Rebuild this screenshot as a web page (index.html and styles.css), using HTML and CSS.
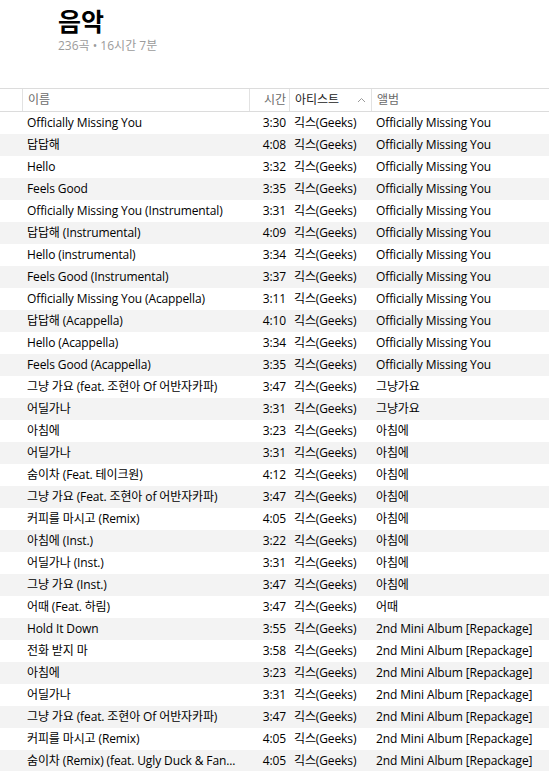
FILE: index.html
```html
<!DOCTYPE html>
<html lang="ko">
<head>
<meta charset="utf-8">
<title>음악</title>
<link rel="stylesheet" href="styles.css">
</head>
<body>
<div class="page">
  <header class="top">
    <h1 class="title">음악</h1>
    <div class="sub">236곡 • 16시간 7분</div>
  </header>
  <div class="list">
    <div class="row head">
      <div class="c lead"></div>
      <div class="c name">이름</div>
      <div class="c time">시간</div>
      <div class="c artist sorted">아티스트<span class="arrow"><svg width="9" height="6" viewBox="0 0 9 6"><path d="M1 5 L4.5 1.5 L8 5" fill="none" stroke="#9a9a9a" stroke-width="1"/></svg></span></div>
      <div class="c album">앨범</div>
    </div>
    <div class="row"><div class="c lead"></div><div class="c name">Officially Missing You</div><div class="c time">3:30</div><div class="c artist">긱스(Geeks)</div><div class="c album">Officially Missing You</div></div>
    <div class="row"><div class="c lead"></div><div class="c name">답답해</div><div class="c time">4:08</div><div class="c artist">긱스(Geeks)</div><div class="c album">Officially Missing You</div></div>
    <div class="row"><div class="c lead"></div><div class="c name">Hello</div><div class="c time">3:32</div><div class="c artist">긱스(Geeks)</div><div class="c album">Officially Missing You</div></div>
    <div class="row"><div class="c lead"></div><div class="c name">Feels Good</div><div class="c time">3:35</div><div class="c artist">긱스(Geeks)</div><div class="c album">Officially Missing You</div></div>
    <div class="row"><div class="c lead"></div><div class="c name">Officially Missing You (Instrumental)</div><div class="c time">3:31</div><div class="c artist">긱스(Geeks)</div><div class="c album">Officially Missing You</div></div>
    <div class="row"><div class="c lead"></div><div class="c name">답답해 (Instrumental)</div><div class="c time">4:09</div><div class="c artist">긱스(Geeks)</div><div class="c album">Officially Missing You</div></div>
    <div class="row"><div class="c lead"></div><div class="c name">Hello (instrumental)</div><div class="c time">3:34</div><div class="c artist">긱스(Geeks)</div><div class="c album">Officially Missing You</div></div>
    <div class="row"><div class="c lead"></div><div class="c name">Feels Good (Instrumental)</div><div class="c time">3:37</div><div class="c artist">긱스(Geeks)</div><div class="c album">Officially Missing You</div></div>
    <div class="row"><div class="c lead"></div><div class="c name">Officially Missing You (Acappella)</div><div class="c time">3:11</div><div class="c artist">긱스(Geeks)</div><div class="c album">Officially Missing You</div></div>
    <div class="row"><div class="c lead"></div><div class="c name">답답해 (Acappella)</div><div class="c time">4:10</div><div class="c artist">긱스(Geeks)</div><div class="c album">Officially Missing You</div></div>
    <div class="row"><div class="c lead"></div><div class="c name">Hello (Acappella)</div><div class="c time">3:34</div><div class="c artist">긱스(Geeks)</div><div class="c album">Officially Missing You</div></div>
    <div class="row"><div class="c lead"></div><div class="c name">Feels Good (Acappella)</div><div class="c time">3:35</div><div class="c artist">긱스(Geeks)</div><div class="c album">Officially Missing You</div></div>
    <div class="row"><div class="c lead"></div><div class="c name">그냥 가요 (feat. 조현아 Of 어반자카파)</div><div class="c time">3:47</div><div class="c artist">긱스(Geeks)</div><div class="c album">그냥가요</div></div>
    <div class="row"><div class="c lead"></div><div class="c name">어딜가나</div><div class="c time">3:31</div><div class="c artist">긱스(Geeks)</div><div class="c album">그냥가요</div></div>
    <div class="row"><div class="c lead"></div><div class="c name">아침에</div><div class="c time">3:23</div><div class="c artist">긱스(Geeks)</div><div class="c album">아침에</div></div>
    <div class="row"><div class="c lead"></div><div class="c name">어딜가나</div><div class="c time">3:31</div><div class="c artist">긱스(Geeks)</div><div class="c album">아침에</div></div>
    <div class="row"><div class="c lead"></div><div class="c name">숨이차 (Feat. 테이크원)</div><div class="c time">4:12</div><div class="c artist">긱스(Geeks)</div><div class="c album">아침에</div></div>
    <div class="row"><div class="c lead"></div><div class="c name">그냥 가요 (Feat. 조현아 of 어반자카파)</div><div class="c time">3:47</div><div class="c artist">긱스(Geeks)</div><div class="c album">아침에</div></div>
    <div class="row"><div class="c lead"></div><div class="c name">커피를 마시고 (Remix)</div><div class="c time">4:05</div><div class="c artist">긱스(Geeks)</div><div class="c album">아침에</div></div>
    <div class="row"><div class="c lead"></div><div class="c name">아침에 (Inst.)</div><div class="c time">3:22</div><div class="c artist">긱스(Geeks)</div><div class="c album">아침에</div></div>
    <div class="row"><div class="c lead"></div><div class="c name">어딜가나 (Inst.)</div><div class="c time">3:31</div><div class="c artist">긱스(Geeks)</div><div class="c album">아침에</div></div>
    <div class="row"><div class="c lead"></div><div class="c name">그냥 가요 (Inst.)</div><div class="c time">3:47</div><div class="c artist">긱스(Geeks)</div><div class="c album">아침에</div></div>
    <div class="row"><div class="c lead"></div><div class="c name">어때 (Feat. 하림)</div><div class="c time">3:47</div><div class="c artist">긱스(Geeks)</div><div class="c album">어때</div></div>
    <div class="row"><div class="c lead"></div><div class="c name">Hold It Down</div><div class="c time">3:55</div><div class="c artist">긱스(Geeks)</div><div class="c album">2nd Mini Album [Repackage]</div></div>
    <div class="row"><div class="c lead"></div><div class="c name">전화 받지 마</div><div class="c time">3:58</div><div class="c artist">긱스(Geeks)</div><div class="c album">2nd Mini Album [Repackage]</div></div>
    <div class="row"><div class="c lead"></div><div class="c name">아침에</div><div class="c time">3:23</div><div class="c artist">긱스(Geeks)</div><div class="c album">2nd Mini Album [Repackage]</div></div>
    <div class="row"><div class="c lead"></div><div class="c name">어딜가나</div><div class="c time">3:31</div><div class="c artist">긱스(Geeks)</div><div class="c album">2nd Mini Album [Repackage]</div></div>
    <div class="row"><div class="c lead"></div><div class="c name">그냥 가요 (feat. 조현아 Of 어반자카파)</div><div class="c time">3:47</div><div class="c artist">긱스(Geeks)</div><div class="c album">2nd Mini Album [Repackage]</div></div>
    <div class="row"><div class="c lead"></div><div class="c name">커피를 마시고 (Remix)</div><div class="c time">4:05</div><div class="c artist">긱스(Geeks)</div><div class="c album">2nd Mini Album [Repackage]</div></div>
    <div class="row"><div class="c lead"></div><div class="c name">숨이차 (Remix) (feat. Ugly Duck &amp; Fan...</div><div class="c time">4:05</div><div class="c artist">긱스(Geeks)</div><div class="c album">2nd Mini Album [Repackage]</div></div>
  </div>
</div>
</body>
</html>
```

FILE: styles.css
```css
html, body {
  margin: 0;
  padding: 0;
  background: #ffffff;
}
body {
  font-family: "Open Sans", "Noto Sans CJK KR", sans-serif;
  color: #000;
  overflow: hidden;
}
.page {
  width: 549px;
  height: 771px;
  overflow: hidden;
}
.top {
  padding: 4px 0 0 58px;
  height: 84px;
  box-sizing: border-box;
}
.title {
  margin: 0;
  font-family: "Noto Sans CJK KR", sans-serif;
  font-size: 25px;
  font-weight: 700;
  line-height: 32px;
  letter-spacing: 0;
}
.sub {
  margin-top: 2px;
  font-size: 12px;
  line-height: 16px;
  color: #9b9b9b;
}
.list {
  border-top: 1px solid #dcdcdc;
  margin-top: 4px;
}
.row {
  display: grid;
  grid-template-columns: 22px 227px 40px 82px 1fr;
  height: 22px;
  font-size: 12px;
  line-height: 22px;
  letter-spacing: -0.12px;
}
.row:nth-child(odd) {
  background: #f3f3f3;
}
.row.head {
  background: #fff;
  border-bottom: 1px solid #dcdcdc;
  color: #6b6b6b;
  height: 22px;
  line-height: 22px;
  letter-spacing: 0;
}
.c {
  white-space: nowrap;
  overflow: hidden;
  padding-left: 5px;
  box-sizing: border-box;
}
.c.lead { padding: 0; }
.c.time {
  text-align: right;
  padding-left: 0;
  padding-right: 3px;
}
.head .c {
  border-left: 1px solid #e2e2e2;
  height: 22px;
}
.head .c.lead { border-left: none; }
.head .sorted {
  color: #222;
  display: flex;
  align-items: center;
  justify-content: space-between;
  padding-right: 5px;
}
.arrow {
  display: inline-flex;
  align-items: center;
}
.row:not(.head) .c.name { padding-right: 4px; }
```
